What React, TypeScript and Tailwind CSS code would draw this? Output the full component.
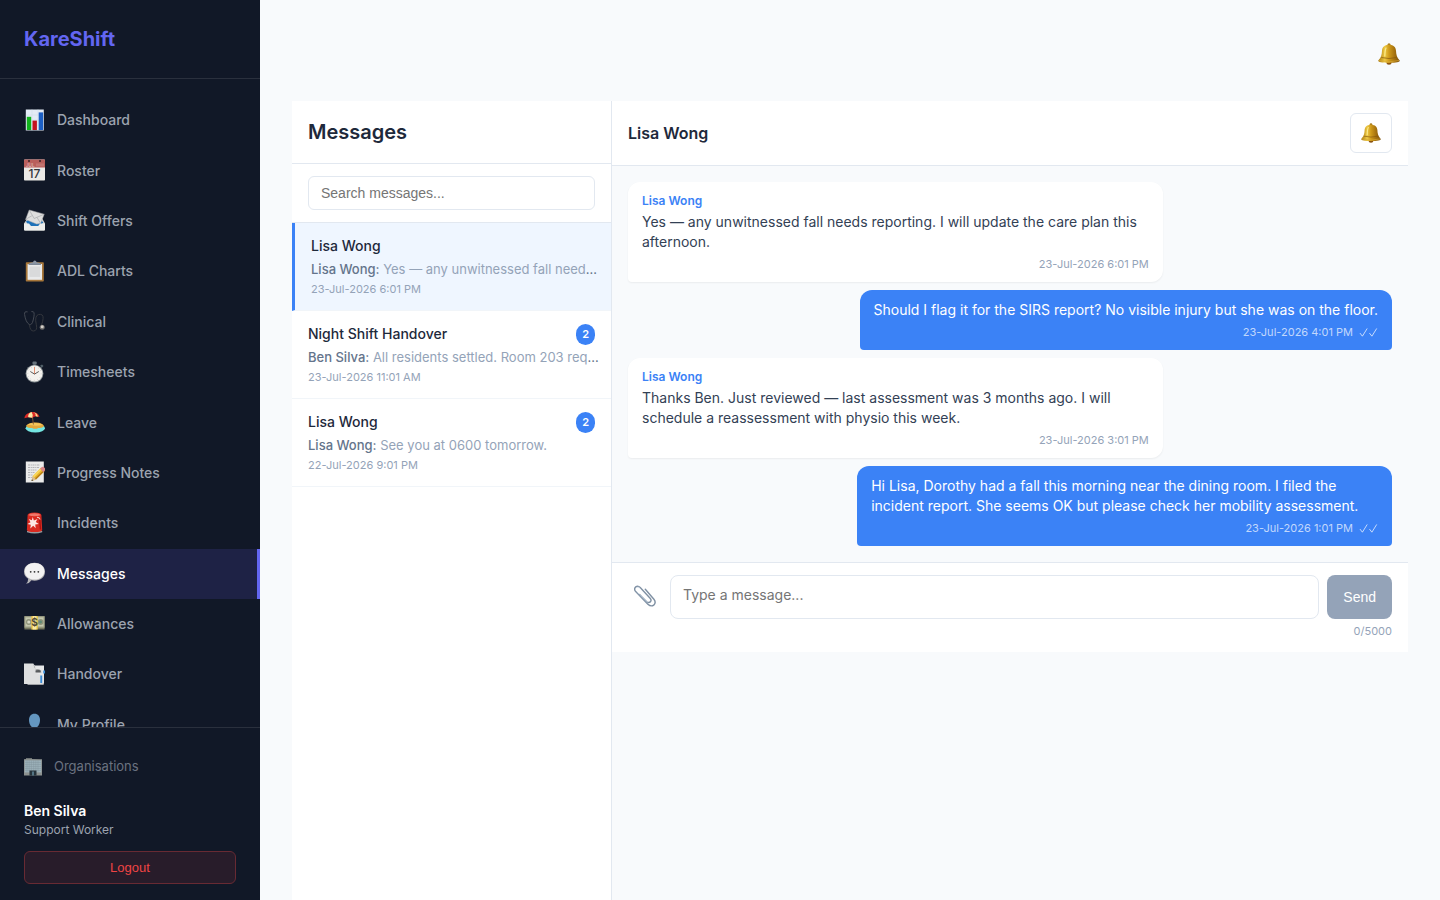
import { useState } from "react";
import type { ReactNode } from "react";

const MAX_LENGTH = 5000;

// Sidebar glyphs share a 21x23 box
function Glyph({ children }: { children: ReactNode }) {
  return (
    <svg viewBox="0 0 21 23" className="w-[21px] h-[23px] shrink-0" aria-hidden="true">
      {children}
    </svg>
  );
}

function ChartIcon() {
  return (
    <Glyph>
      <rect x="1.8" y="0.5" width="18" height="21" fill="#e3ebf5" />
      <path d="M1.8 6h18M1.8 11h18M1.8 16h18M8 .5v21M14 .5v21" stroke="#cbd9ea" strokeWidth="0.5" />
      <rect x="2.8" y="7.8" width="4.4" height="13.2" fill="#11b31c" />
      <rect x="8.5" y="11.6" width="4.4" height="9.4" fill="#c4121f" />
      <rect x="14.7" y="3.4" width="4.4" height="17.6" fill="#1c5fc4" />
    </Glyph>
  );
}

function CalendarIcon() {
  return (
    <Glyph>
      <rect x="0" y="0.5" width="21" height="21" rx="0.8" fill="#ebe9e6" />
      <path d="M0 1.2q0-.7.8-.7h19.4q.8 0 .8.7v7.2H0z" fill="#b95f5c" />
      <rect x="12" y="4.4" width="8" height="3" fill="#c27470" />
      <text x="2" y="7.8" fontSize="4.5" fontWeight="600" fill="#dcb3b0" fontFamily="Inter, sans-serif">
        JUL
      </text>
      <circle cx="5" cy="2" r="1" fill="#3d2327" />
      <circle cx="16" cy="2" r="1" fill="#3d2327" />
      <text x="10.5" y="19.2" textAnchor="middle" fontSize="12" fontWeight="500" fill="#35353a" fontFamily="Inter, sans-serif">
        17
      </text>
    </Glyph>
  );
}

function EnvelopeIcon() {
  return (
    <Glyph>
      <path d="M2.4 11L0 14.5v6q0 1 1 1h19q1 0 1-1v-6L18.5 10z" fill="#d2d3d3" />
      <path d="M2 12.5L4 11h13l2.2 2.5-3 3.5H5z" fill="#1e72b9" />
      <path d="M5.2 1l15 4.2-3.6 9.2-4 .6-11-4.6z" fill="#dedede" stroke="#a9a9ab" strokeWidth="0.5" />
      <path d="M5.2 1l5 8.5 10-4.3M1.6 10.4l6.2-3.6M16.6 14.4l-3.6-6" fill="none" stroke="#a0a1a4" strokeWidth="0.6" />
      <path d="M0 14.5h5l2 2.6h7.2l2-2.6H21v6q0 1-1 1H1q-1 0-1-1z" fill="#eeeeec" />
    </Glyph>
  );
}

function ClipboardIcon() {
  return (
    <Glyph>
      <rect x="1.8" y="2.2" width="18" height="19.3" rx="0.8" fill="#a8773a" />
      <rect x="3.6" y="4" width="14.4" height="15.8" fill="#e9eaeb" />
      <rect x="5.5" y="6.5" width="10.6" height="10.4" fill="#d9dadb" />
      <path d="M5 4.4q0-1.4 1.4-1.7l2.6-.4q.3-1.7 1.8-1.7t1.8 1.7l2.6.4q1.4.3 1.4 1.7z" fill="#8b96a5" />
      <path d="M4.5 4.4h12.5" stroke="#667284" strokeWidth="0.8" />
    </Glyph>
  );
}

function StethoscopeIcon() {
  return (
    <Glyph>
      <g fill="none" strokeLinecap="round">
        <path d="M3.2 1.8Q0 1 .6 4.5 1.6 12 5.2 14.5 8 15.5 9.2 10 11 3 9.4 1.8L7.8 1.6" stroke="#454a54" />
        <path d="M5.5 15q.5 6.3 4.2 6 4-.5 2.6-6.300-2-8.700 2.200-10.200 5-1 4.600 4-.2 3.500-1.500 6" stroke="#33363d" />
      </g>
      <circle cx="18.2" cy="17.2" r="2.5" fill="#6c6b6b" />
      <circle cx="18.2" cy="16.8" r="1.5" fill="#d3cec9" />
    </Glyph>
  );
}

function StopwatchIcon() {
  return (
    <Glyph>
      <rect x="8.5" y="0.6" width="4.2" height="3.2" rx="1" fill="#68737d" />
      <path d="M16 4.8l2-1.3 1.5 1.6-1.6 1.700z" fill="#53616a" />
      <circle cx="10.500" cy="12.600" r="8.900" fill="#8b9295" />
      <circle cx="10.5" cy="12.6" r="8" fill="#f4f2ee" />
      <circle cx="10.5" cy="12.6" r="6.7" fill="none" stroke="#b5b5b5" strokeWidth="0.9" strokeDasharray="0.6 2.9" />
      <path d="M10.5 13V6" stroke="#e07a55" strokeWidth="0.8" />
      <path d="M6.3 10.5l4.2 2.6 4.3-2.6" fill="none" stroke="#4a4a4a" strokeWidth="0.9" />
    </Glyph>
  );
}

function BeachIcon() {
  return (
    <Glyph>
      <ellipse cx="11.3" cy="17.2" rx="9.7" ry="4.2" fill="#74e6e2" />
      <path d="M2 14.8Q5 11.4 11.500 11.500q6.500-.2 8.600 3.500-2 2.500-5.800 1.900-3 1.800-6.300 0-4.400.8-6-2.100z" fill="#e3a63a" />
      <path d="M3.500 13.800q4-2.300 8-1.900 5 0 7.500 2-7 1.500-15.500-.1z" fill="#f4c65c" />
      <path d="M8.400 5.500l1 8" stroke="#8a5a33" strokeWidth="0.9" />
      <path d="M.4 7.200Q.6 2.600 6.800 1.200q7-.8 8.700 4.800L11.600 5.300 8.300 6.800 4.300 6.200z" fill="#dd2a26" />
      <path d="M6.800 1.200Q3.600 3 4.300 6.200l4 .6Q9.200 3.300 7.600 1.100z" fill="#fbeaa5" />
      <path d="M8.600 1.100q3.600 1 3 4.200l2.300.4Q13.400 2 8.600 1.100z" fill="#f9df8d" />
    </Glyph>
  );
}

function MemoIcon() {
  return (
    <Glyph>
      <rect x="1.8" y="0.5" width="18" height="21" fill="#eaeaea" />
      <path
        d="M4 4h12M4 6.500h11M4 9h9M4 11.500h7M4 14h5M4 16.500h4"
        stroke="#a3a5a9"
        strokeWidth="0.8"
        strokeDasharray="2 0.7 1.2 0.6"
      />
      <path d="M7.500 20l1.300-5L17 6.800l3.400 3.400L12 18.500z" fill="#e9b62d" />
      <path d="M8.800 15L17 6.800l1.300 1.300L10 16.400z" fill="#f8d860" />
      <path d="M12 18.500l8.400-8.300-1-1-8.500 8.400z" fill="#b87e16" />
      <path d="M7.500 20l1.300-5 3.200 3.500z" fill="#d9bd94" />
      <path d="M7.500 20l.5-1.800 1.200 1.200z" fill="#333" />
      <path d="M16 7.800l1.800-1.700q1.500-.7 2.700.7 1.100 1.200.5 2.600l-1.700 1.800z" fill="#d98688" />
    </Glyph>
  );
}

function SirenIcon() {
  return (
    <Glyph>
      <path d="M3 19h15.200v1.200q-7.600 2.800-15.200 0z" fill="#969ca0" />
      <path d="M3.600 3Q4 .5 10.500.5T17.400 3l.8 15q-.4 2-7.700 2T2.900 18z" fill="#d92a20" />
      <path d="M4.600 3.300Q5 1.200 10.500 1.200t6 2.100q-2.500 1-6 1t-5.900-1z" fill="#f0776a" />
      <path d="M15.500 5l1 12.500" stroke="#a9120f" strokeWidth="1.4" />
      <path d="M8.700 5l1.200 3.500 3.600-1.600-1.700 3.200 3 2-3.600.5.500 3.700-2.500-2.500-2.900 2.800.5-3.900-3.300-.6 3-1.900-1.700-3.200 3.100 1.300z" fill="#fce8e4" />
      <path d="M13 5.500q2.500-.5 3 2" fill="none" stroke="#f9c8c0" strokeWidth="1.2" />
    </Glyph>
  );
}

function SpeechIcon() {
  return (
    <Glyph>
      <path d="M10.500.7C16.500.7 21 4.300 21 9.700s-4.500 9-10.500 9q-1.600 0-3-.4-1.600 2.800-5.500 3.500 2.300-2 2.200-5Q0 14 0 9.700C0 4.300 4.500.7 10.500.7z" fill="#b5b4b6" />
      <path d="M10.500 1c5.600 0 9.800 3.200 9.800 8.200s-4.200 8.300-9.800 8.300S.8 14.200.8 9.200s4.100-8.200 9.700-8.200z" fill="#f2f1f2" />
      <circle cx="6.700" cy="9.800" r="0.9" fill="#333" />
      <circle cx="10.500" cy="9.800" r="0.9" fill="#333" />
      <circle cx="14.300" cy="9.800" r="0.9" fill="#333" />
    </Glyph>
  );
}

function CashIcon() {
  return (
    <Glyph>
      <rect x="0.4" y="3.200" width="20.200" height="13.300" fill="#75765f" />
      <rect x="0.4" y="3.200" width="20.200" height="11.500" fill="#a2a58a" />
      <rect x="1.6" y="4.400" width="17.800" height="9" fill="#c5c8ae" />
      <circle cx="4.8" cy="9" r="2.900" fill="#8f947a" />
      <circle cx="4.8" cy="9" r="1.600" fill="#d5d7c4" />
      <circle cx="16.600" cy="9" r="2.900" fill="#8f947a" />
      <circle cx="16.600" cy="9" r="1.400" fill="#5f8b78" />
      <rect x="7.400" y="3.100" width="6.400" height="13.400" fill="#edc43f" />
      <rect x="8.700" y="3.100" width="3.800" height="13.400" fill="#f9eaa6" />
      <text x="10.600" y="13" textAnchor="middle" fontSize="10" fontWeight="700" fill="#4f4a35" fontFamily="Inter, sans-serif">
        $
      </text>
    </Glyph>
  );
}

function HandoverIcon() {
  return (
    <Glyph>
      <path d="M3.500 3h16.200v18.800H3.500z" fill="#c2c3c5" />
      <path d="M10 2.500h10v18H10z" fill="#e6e7e8" />
      <path d="M0 .5h9.300L12 4.400v2.300h6v3.200h-5.500L17 12v9H0z" fill="#dedfe0" />
      <path d="M9.300.5q.3 3.500 2.500 6l-.6 2.300q5.400-.8 6 1.200l-.6-2.800q-1.800-1.600-5-.8z" fill="#8a8c8e" />
      <path d="M12 7.500q3-1.300 4.500.3v1.800h-5z" fill="#585b5e" />
      <rect x="16.300" y="12.500" width="1.900" height="7.500" fill="#3d8ed8" />
      <rect x="19.200" y="7.500" width="1.800" height="3" fill="#3d8ed8" />
    </Glyph>
  );
}

function ProfileIcon() {
  return (
    <Glyph>
      <path d="M10.500.8c3.500 0 5.500 2.600 5.500 6.200s-2 8-5.500 8S5 10.600 5 7 7 .8 10.500.8z" fill="#6496bf" />
      <path d="M0 22q.5-6.500 7.500-7l3 1 3-1q7 .5 7.500 7z" fill="#5586b0" />
    </Glyph>
  );
}

function BuildingIcon() {
  return (
    <svg viewBox="0 0 18 18" className="w-[18px] h-[18px] shrink-0" aria-hidden="true">
      <path d="M0 1.300L2 1V.3h6V1l10 .3v16.200H0z" fill="#8c918f" />
      <rect x="0.8" y="2.400" width="16.400" height="12" fill="#9bb0b9" />
      <path d="M.8 4.500h16.400M.8 6.500h16.400M.8 8.500h16.400M.8 10.500h16.400M.8 12.500h16.400M3 2.400v12M5.200 2.400v12M7.400 2.400v12M9.600 2.400v12M11.800 2.400v12M14 2.400v12" stroke="#82939b" strokeWidth="0.4" />
      <rect x="5.500" y="12.500" width="7" height="5" fill="#26333b" />
      <path d="M8 13.500h2v4H8z" fill="#527383" />
    </svg>
  );
}

function BellIcon({ className }: { className: string }) {
  return (
    <svg viewBox="0 0 22 22" className={className} aria-hidden="true">
      <defs>
        <linearGradient id="bell-gold" x1="0" x2="1" y1="0" y2="0">
          <stop offset="0" stopColor="#a8760d" />
          <stop offset="0.3" stopColor="#eec944" />
          <stop offset="0.5" stopColor="#cf9a1a" />
          <stop offset="0.75" stopColor="#a6720f" />
          <stop offset="1" stopColor="#7c4f0a" />
        </linearGradient>
      </defs>
      <ellipse cx="11" cy="19.800" rx="2.600" ry="2" fill="#8b5310" />
      <circle cx="11" cy="1.800" r="1.500" fill="#a77b1c" />
      <path d="M11 1.800c4.600 0 6.800 2.400 7 6 .2 4 .8 6.500 3.700 9.700.6 1.200-2.700 2.400-10.700 2.400S-.3 18.700.3 17.500c2.900-3.200 3.500-5.700 3.700-9.700.2-3.600 2.400-6 7-6z" fill="url(#bell-gold)" />
      <path d="M3.300 14.500q7.700 2 15.400 0" fill="none" stroke="#84560d" strokeWidth="0.7" />
      <path d="M1 17.500q10 2.600 20 0" fill="none" stroke="#d8aa36" strokeWidth="0.7" />
      <path d="M8 5q-1 2-1.200 8" fill="none" stroke="#fbea8c" strokeWidth="1.200" strokeLinecap="round" />
    </svg>
  );
}

function PaperclipIcon() {
  return (
    <svg viewBox="0 0 22 22" className="w-[22px] h-[22px]" fill="none" aria-hidden="true">
      <path
        d="M5.500 9.500l7.200 7.200q2 1.500 3.600.2 1.600-1.700-.2-3.700L6.200 2.600Q4 .3 1.800 1.800-.5 4 1.700 6.600l12.200 12.600q3 2.800 5.800 1 2.800-2.600.2-5.900L11.300 4.300"
        stroke="#7f90a3"
        strokeWidth="1.400"
        strokeLinecap="round"
      />
      <path d="M6.200 3.200Q4.200 1.200 2.500 2.500M6.500 10.300l6.500 6.300M2.500 6.600l12 12.300" stroke="#c3d3e3" strokeWidth="0.5" />
    </svg>
  );
}

function ReadTicks() {
  return (
    <svg viewBox="0 0 19 9" className="w-[19px] h-[9px]" fill="none" stroke="currentColor" role="img" aria-label="Read">
      <path d="M1.200 5.400l2.200 2.800L8 .8M10.700 5.400l2.200 2.800L17.500.8" strokeLinecap="round" strokeLinejoin="round" />
    </svg>
  );
}

const navItems = [
  { label: "Dashboard", icon: ChartIcon },
  { label: "Roster", icon: CalendarIcon },
  { label: "Shift Offers", icon: EnvelopeIcon },
  { label: "ADL Charts", icon: ClipboardIcon },
  { label: "Clinical", icon: StethoscopeIcon },
  { label: "Timesheets", icon: StopwatchIcon },
  { label: "Leave", icon: BeachIcon },
  { label: "Progress Notes", icon: MemoIcon },
  { label: "Incidents", icon: SirenIcon },
  { label: "Messages", icon: SpeechIcon },
  { label: "Allowances", icon: CashIcon },
  { label: "Handover", icon: HandoverIcon },
  { label: "My Profile", icon: ProfileIcon },
];

const conversations = [
  { id: 1, name: "Lisa Wong", sender: "Lisa Wong", preview: "Yes — any unwitnessed fall needs reporting.", time: "23-Jul-2026 6:01 PM", unread: 0 },
  { id: 2, name: "Night Shift Handover", sender: "Ben Silva", preview: "All residents settled. Room 203 requires checks.", time: "23-Jul-2026 11:01 AM", unread: 2 },
  { id: 3, name: "Lisa Wong", sender: "Lisa Wong", preview: "See you at 0600 tomorrow.", time: "22-Jul-2026 9:01 PM", unread: 2 },
];

const thread = [
  { id: 1, mine: false, text: "Yes — any unwitnessed fall needs reporting. I will update the care plan this afternoon.", time: "23-Jul-2026 6:01 PM" },
  { id: 2, mine: true, text: "Should I flag it for the SIRS report? No visible injury but she was on the floor.", time: "23-Jul-2026 4:01 PM" },
  { id: 3, mine: false, text: "Thanks Ben. Just reviewed — last assessment was 3 months ago. I will schedule a reassessment with physio this week.", time: "23-Jul-2026 3:01 PM" },
  { id: 4, mine: true, text: "Hi Lisa, Dorothy had a fall this morning near the dining room. I filed the incident report. She seems OK but please check her mobility assessment.", time: "23-Jul-2026 1:01 PM" },
];

function Sidebar() {
  return (
    <aside className="w-[260px] shrink-0 h-screen flex flex-col bg-[#111827]">
      <div className="px-6 py-6 border-b border-[#2a303d]">
        <h1 className="text-xl leading-[30px] font-bold text-[#6366f1]">KareShift</h1>
      </div>

      <nav className="flex-1 min-h-0 overflow-hidden py-4">
        {navItems.map(({ label, icon: Icon }) => (
          <a
            key={label}
            href="#"
            className={
              label === "Messages"
                ? "flex items-center gap-3 px-6 py-3 bg-[#1e2245] border-r-[3px] border-[#6366f1] text-white"
                : "flex items-center gap-3 px-6 py-3 text-[#9ca3af]"
            }
          >
            <span className="flex items-center h-[1.65em]">
              <Icon />
            </span>
            <span className="text-sm leading-5 font-medium">{label}</span>
          </a>
        ))}
      </nav>

      <div className="px-6 py-4 border-t border-[#2a303d]">
        <a href="#" className="flex items-center gap-3 py-3 mb-3 text-[13px] leading-[21px] text-[#6b7280]">
          <BuildingIcon />
          Organisations
        </a>
        <div className="text-sm leading-5 font-semibold text-white">Ben Silva</div>
        <div className="text-xs leading-[18px] text-[#9ca3af]">Support Worker</div>
        <button className="mt-3 w-full h-[33px] rounded-md border border-[#682a33] bg-[#281c2a] font-['Liberation_Sans',sans-serif] text-[13px] text-[#ef4444]">
          Logout
        </button>
      </div>
    </aside>
  );
}

function ConversationList() {
  const [selected, setSelected] = useState(1);

  return (
    <section className="w-80 shrink-0 bg-white border-r border-[#e2e8f0]">
      <div className="p-4 border-b border-[#e2e8f0]">
        <h2 className="text-xl leading-[30px] font-semibold text-[#1e293b]">Messages</h2>
      </div>
      <div className="px-4 py-3 border-b border-[#e2e8f0]">
        <input
          type="text"
          aria-label="Search messages"
          placeholder="Search messages..."
          className="block w-full h-[34px] px-3 rounded-md border border-[#e2e8f0] font-['Liberation_Sans',sans-serif] text-sm placeholder:text-[#757575] outline-none"
        />
      </div>
      {conversations.map((c) => (
        <button
          key={c.id}
          onClick={() => setSelected(c.id)}
          className={
            c.id === selected
              ? "block w-full text-left px-4 py-3 border-b border-b-[#f1f5f9] border-l-[3px] border-l-[#3b82f6] bg-[#eff6ff]"
              : "block w-full text-left px-4 py-3 border-b border-[#f1f5f9]"
          }
        >
          <div className="flex items-center justify-between h-[22px]">
            <span className="text-sm font-medium text-[#1e293b]">{c.name}</span>
            {c.unread > 0 && (
              <span className="px-1.5 rounded-full bg-[#3b82f6] text-[11px] leading-[21px] font-semibold text-white">
                {c.unread}
              </span>
            )}
          </div>
          <div className="mt-0.5 -mr-1.5 truncate text-[13px] leading-5 text-[#64748b]">
            <span className="font-medium">{c.sender}:</span> <span className="text-[#94a3b8]">{c.preview}</span>
          </div>
          <div className="mt-0.5 text-[11px] leading-[17px] text-[#94a3b8]">{c.time}</div>
        </button>
      ))}
    </section>
  );
}

function Chat() {
  const [draft, setDraft] = useState("");

  return (
    <section className="flex-1 min-w-0">
      <div className="flex items-center justify-between px-4 py-3 bg-white border-b border-[#e2e8f0]">
        <h3 className="text-base font-semibold text-[#1e293b]">Lisa Wong</h3>
        <button aria-label="Mute conversation" className="w-[42px] h-10 flex items-center justify-center rounded-md border border-[#e2e8f0] bg-white">
          <BellIcon className="w-5 h-5" />
        </button>
      </div>

      <div className="flex flex-col gap-2 p-4">
        {thread.map((m) =>
          m.mine ? (
            <div key={m.id} className="self-end max-w-[70%] px-3.5 py-2.5 rounded-t-xl rounded-b bg-[#3b82f6] text-white">
              <p className="text-sm leading-5">{m.text}</p>
              <div className="mt-1 flex items-center justify-end gap-1.5 text-[11px] leading-4 text-white/70">
                {m.time}
                <ReadTicks />
              </div>
            </div>
          ) : (
            <div key={m.id} className="self-start max-w-[70%] px-3.5 py-2.5 rounded-xl rounded-bl bg-white shadow-[0_1px_2px_rgba(0,0,0,0.06)]">
              <div className="mb-0.5 text-xs leading-[18px] font-semibold text-[#3b82f6]">Lisa Wong</div>
              <p className="text-sm leading-5 text-[#334155]">{m.text}</p>
              <div className="mt-1 text-right text-[11px] leading-4 text-[#94a3b8]">{m.time}</div>
            </div>
          ),
        )}
      </div>

      <div className="px-4 py-3 bg-white border-t border-[#e2e8f0]">
        <div className="flex gap-2">
          <button aria-label="Attach file" className="px-1.5 pb-0.5 flex items-center">
            <PaperclipIcon />
          </button>
          <textarea
            rows={1}
            aria-label="Message"
            placeholder="Type a message..."
            maxLength={MAX_LENGTH}
            value={draft}
            onChange={(e) => setDraft(e.target.value)}
            className="flex-1 h-11 px-3 py-[9px] resize-none rounded-lg border border-[#e2e8f0] text-sm leading-5 placeholder:text-[#757575] outline-none"
          />
          <button className="px-4 rounded-lg bg-[#94a3b8] font-['Liberation_Sans',sans-serif] text-sm text-white">Send</button>
        </div>
        <div className="mt-1 text-right text-[11px] leading-[17px] text-[#94a3b8]">
          {draft.length}/{MAX_LENGTH}
        </div>
      </div>
    </section>
  );
}

export default function App() {
  return (
    <div className="flex h-screen overflow-hidden bg-[#f8fafc] font-['Inter',sans-serif]">
      <Sidebar />
      <main className="flex-1 min-w-0 flex flex-col px-8 pt-8">
        <div className="h-[45px] mb-6 flex items-center justify-end">
          <button aria-label="Notifications" className="px-2 pb-0.5">
            <BellIcon className="w-[22px] h-[22px]" />
          </button>
        </div>
        <div className="flex-1 flex">
          <ConversationList />
          <Chat />
        </div>
      </main>
    </div>
  );
}
